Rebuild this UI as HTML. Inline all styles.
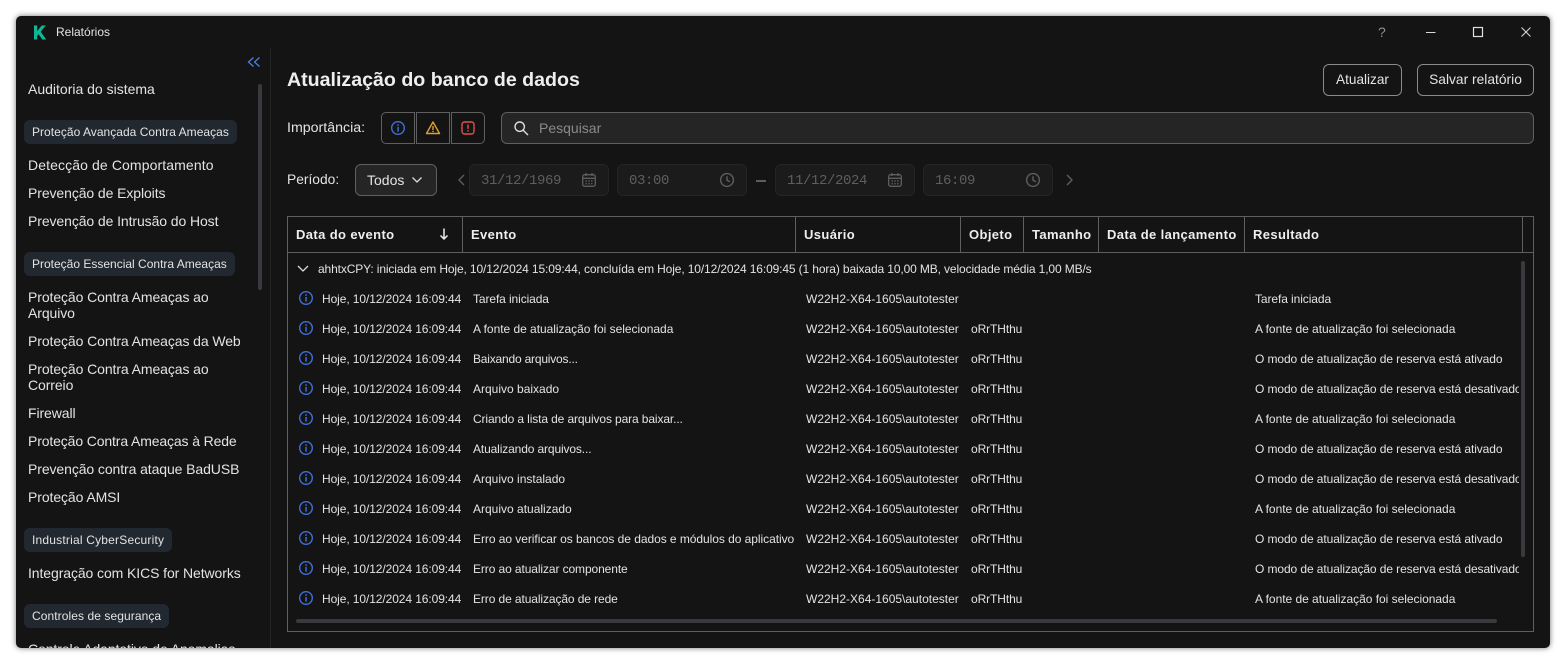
<!DOCTYPE html>
<html lang="pt"><head><meta charset="utf-8"><title>Relatórios</title>
<style>
*{box-sizing:border-box}
html,body{margin:0;padding:0;width:1566px;height:664px;overflow:hidden;background:#fff;font-family:"Liberation Sans",sans-serif}
#win{position:absolute;left:16px;top:16px;width:1534px;height:632px;background:#141414;border-radius:5px;box-shadow:0 0 6px rgba(0,0,0,.55);overflow:hidden}
#win>*{position:absolute}
.a{position:absolute;white-space:nowrap}
.n{left:12px;font-size:14px;line-height:16px;color:#e3e3e3;width:226px;white-space:normal;position:absolute;letter-spacing:-.09px}
.g{position:absolute;left:8px;height:24px;line-height:24px;background:#212830;border-radius:6px;color:#e3e3e3;font-size:12px;padding:0 8px;white-space:nowrap}
.btn{position:absolute;height:32px;border:1px solid #8a8a8a;border-radius:6px;color:#e3e3e3;font-size:13.6px;line-height:29px;text-align:center}
.sev{position:absolute;top:96px;width:34px;height:32px;border:1px solid #5f5f5f}
.sev svg{position:absolute;left:8px;top:7px}
.f{position:absolute;top:148px;height:32px;background:#1b1b1b;border:1px solid #242424;border-radius:6px;color:#5e5e5e;font:14px/32px "Liberation Mono",monospace;letter-spacing:-.4px;padding-left:11px}
.f svg{position:absolute;top:7px}
.hd{position:absolute;top:200px;height:37px;border-right:1px solid #5f5f5f;color:#eee;font-weight:bold;font-size:13px;line-height:37px;padding-left:8px;white-space:nowrap;letter-spacing:.38px}
.c{position:absolute;font-size:12px;line-height:16px;color:#e3e3e3;white-space:nowrap;overflow:hidden}
.d{left:306px;width:145px;letter-spacing:-.09px}.e{left:457px;width:322px;letter-spacing:-.1px}.u{left:790px;width:158px}.o{left:955px;width:56px;letter-spacing:-.1px}.r{left:1239px;width:264px;letter-spacing:-.09px}
.i{position:absolute;left:282px}
</style></head><body>
<svg width="0" height="0" style="position:absolute"><defs>
<symbol id="info" viewBox="0 0 16 16"><circle cx="8" cy="8" r="6.3" fill="none" stroke="#3f6fd8" stroke-width="1.4"/><rect x="7.3" y="7" width="1.5" height="4.6" fill="#3f6fd8"/><rect x="7.3" y="4.3" width="1.5" height="1.6" fill="#3f6fd8"/></symbol>
<symbol id="cal" viewBox="0 0 16 16"><g fill="none" stroke="#5e5e5e" stroke-width="1.3"><rect x="1.7" y="2.7" width="12.6" height="11.6" rx="2"/><path d="M2 6.3h12M5 1v3M11 1v3"/></g><path d="M4.5 8.3h1.4v1.4H4.500zM7.300 8.300h1.400v1.400H7.300zM10.100 8.300h1.400v1.400h-1.400zM4.500 11h1.400v1.400H4.500zM7.300 11h1.400v1.400H7.300zM10.100 11h1.400v1.400h-1.400z" fill="#5e5e5e"/></symbol>
<symbol id="clk" viewBox="0 0 16 16"><circle cx="8" cy="8" r="6.4" fill="none" stroke="#5e5e5e" stroke-width="1.4"/><path d="M8 4.300V8.300L11 9.800" fill="none" stroke="#5e5e5e" stroke-width="1.4"/></symbol>
</defs></svg>
<div id="win">
<!-- title bar -->
<svg style="left:17px;top:9px" width="14" height="15" viewBox="0 0 14 15"><path d="M1 .5h3.200v5.800L8.700 .5h4.100L7.700 6.800l5.600 7.700H9.300L5.600 9.200 4.200 10.900v3.600H1z" fill="#10b795"/></svg>
<div class="a" style="left:40px;top:9px;font-size:12px;line-height:15px;color:#e3e3e3">Relatórios</div>
<div class="a" style="left:1362px;top:8px;font-size:14px;line-height:16px;color:#8f8f8f">?</div>
<svg style="left:1410px;top:8px" width="120" height="16" viewBox="0 0 120 16"><path d="M-.5 8.500h10" stroke="#d8d8d8" stroke-width="1" fill="none"/><rect x="47.500" y="3.500" width="9" height="9" stroke="#e0e0e0" stroke-width="1.200" fill="none"/><path d="M95.500 3.500l9 9M104.500 3.500l-9 9" stroke="#d8d8d8" stroke-width="1" fill="none"/></svg>
<!-- sidebar -->
<div style="left:254px;top:32px;width:1px;height:600px;background:#262626"></div>
<svg style="left:231px;top:40px" width="14" height="12" viewBox="0 0 14 12"><path d="M6.500 1.500L1.500 6l5 4.500M12.500 1.500L7.500 6l5 4.500" fill="none" stroke="#4f7fe0" stroke-width="1.300"/></svg>
<div style="left:242px;top:68px;width:4px;height:206px;background:#3a3a3e;border-radius:2px"></div>
<div class="n" style="top:65px;letter-spacing:0">Auditoria do sistema</div>
<div class="g" style="top:104px;letter-spacing:.03px">Proteção Avançada Contra Ameaças</div>
<div class="n" style="top:141px;letter-spacing:.11px">Detecção de Comportamento</div>
<div class="n" style="top:169px">Prevenção de Exploits</div>
<div class="n" style="top:197px">Prevenção de Intrusão do Host</div>
<div class="g" style="top:236px">Proteção Essencial Contra Ameaças</div>
<div class="n" style="top:273px">Proteção Contra Ameaças ao Arquivo</div>
<div class="n" style="top:317px">Proteção Contra Ameaças da Web</div>
<div class="n" style="top:345px">Proteção Contra Ameaças ao Correio</div>
<div class="n" style="top:389px">Firewall</div>
<div class="n" style="top:417px;letter-spacing:-.13px">Proteção Contra Ameaças à Rede</div>
<div class="n" style="top:445px">Prevenção contra ataque BadUSB</div>
<div class="n" style="top:473px">Proteção AMSI</div>
<div class="g" style="top:512px;letter-spacing:.2px">Industrial CyberSecurity</div>
<div class="n" style="top:549px">Integração com KICS for Networks</div>
<div class="g" style="top:588px;letter-spacing:.08px">Controles de segurança</div>
<div class="n" style="top:625px">Controle Adaptativo de Anomalias</div>
<!-- heading -->
<div class="a" style="left:271px;top:52px;font-size:19.6px;line-height:24px;font-weight:bold;color:#eee">Atualização do banco de dados</div>
<div class="btn" style="left:1307px;top:48px;width:79px">Atualizar</div>
<div class="btn" style="left:1401px;top:48px;width:117px;font-size:13.8px">Salvar relatório</div>
<!-- importance -->
<div class="a" style="left:271px;top:104px;font-size:14.2px;line-height:16px;color:#e3e3e3">Importância:</div>
<div class="sev" style="left:365px;border-radius:5px 0 0 5px"><svg width="16" height="16"><use href="#info"/></svg></div>
<div class="sev" style="left:400px"><svg width="16" height="16" viewBox="0 0 16 16"><path d="M8 2L14.500 13.500H1.500z" fill="none" stroke="#e0a030" stroke-width="1.400" stroke-linejoin="round"/><path d="M7.300 6h1.400v4H7.300zM7.300 10.800h1.400v1.300H7.300z" fill="#e0a030"/></svg></div>
<div class="sev" style="left:435px;border-radius:0 5px 5px 0"><svg width="16" height="16" viewBox="0 0 16 16"><rect x="2" y="2" width="12" height="12" rx="2.500" fill="none" stroke="#e05050" stroke-width="1.400"/><path d="M7.300 4.500h1.400v4.400H7.300zM7.300 10h1.400v1.500H7.300z" fill="#e05050"/></svg></div>
<div style="left:485px;top:96px;width:1033px;height:32px;background:#252525;border:1px solid #5f5f5f;border-radius:6px"></div>
<svg style="left:497px;top:104px" width="16" height="16" viewBox="0 0 16 16"><circle cx="6.700" cy="6.700" r="4.700" fill="none" stroke="#ddd" stroke-width="1.400"/><path d="M10.200 10.200L15 15" stroke="#ddd" stroke-width="1.400"/></svg>
<div class="a" style="left:523px;top:104px;font-size:14px;line-height:16px;color:#8a8a8a">Pesquisar</div>
<!-- period -->
<div class="a" style="left:271px;top:156px;font-size:13.8px;line-height:16px;color:#e3e3e3">Período:</div>
<div style="left:339px;top:148px;width:82px;height:32px;background:#252525;border:1px solid #5f5f5f;border-radius:6px"></div>
<div class="a" style="left:351px;top:156px;font-size:14px;line-height:16px;color:#e3e3e3">Todos</div>
<svg style="left:395px;top:159px" width="12" height="10" viewBox="0 0 12 10"><path d="M1.500 2.500L6 7l4.500-4.500" fill="none" stroke="#ddd" stroke-width="1.300"/></svg>
<svg style="left:441px;top:158px" width="10" height="12" viewBox="0 0 10 12"><path d="M7 1L2 6l5 5" fill="none" stroke="#5e5e5e" stroke-width="1.400"/></svg>
<div class="f" style="left:453px;width:140px">31/12/1969<svg style="left:111px" width="16" height="16"><use href="#cal"/></svg></div>
<div class="f" style="left:601px;width:130px">03:00<svg style="left:101px" width="16" height="16"><use href="#clk"/></svg></div>
<div style="left:740px;top:164px;width:10px;height:1.500px;background:#5e5e5e"></div>
<div class="f" style="left:759px;width:140px">11/12/2024<svg style="left:111px" width="16" height="16"><use href="#cal"/></svg></div>
<div class="f" style="left:907px;width:130px">16:09<svg style="left:101px" width="16" height="16"><use href="#clk"/></svg></div>
<svg style="left:1048px;top:158px" width="10" height="12" viewBox="0 0 10 12"><path d="M3 1l5 5-5 5" fill="none" stroke="#5e5e5e" stroke-width="1.400"/></svg>
<!-- table -->
<div style="left:271px;top:200px;width:1247px;height:416px;border:1px solid #5f5f5f"></div>
<div style="left:271px;top:236px;width:1247px;height:1px;background:#5f5f5f"></div>
<div class="hd" style="left:272px;width:175px">Data do evento</div>
<svg style="left:421px;top:211px" width="14" height="14" viewBox="0 0 14 14"><path d="M7 1.500v10M3.500 8.500L7 12l3.500-3.500" fill="none" stroke="#eee" stroke-width="1.500"/></svg>
<div class="hd" style="left:447px;width:333px">Evento</div>
<div class="hd" style="left:780px;width:165px">Usuário</div>
<div class="hd" style="left:945px;width:63px">Objeto</div>
<div class="hd" style="left:1008px;width:75px">Tamanho</div>
<div class="hd" style="left:1083px;width:146px">Data de lançamento</div>
<div class="hd" style="left:1229px;width:278px">Resultado</div>
<svg style="left:281px;top:248px" width="12" height="10" viewBox="0 0 12 10"><path d="M1 2l5 5 5-5" fill="none" stroke="#ddd" stroke-width="1.300"/></svg>
<div class="c" style="left:302px;top:245px;width:1200px;letter-spacing:-.125px">ahhtxCPY: iniciada em Hoje, 10/12/2024 15:09:44, concluída em Hoje, 10/12/2024 16:09:45 (1 hora) baixada 10,00 MB, velocidade média 1,00 MB/s</div>

<svg class="i" style="top:274px" width="16" height="16"><use href="#info"/></svg><div class="c d" style="top:275px">Hoje, 10/12/2024 16:09:44</div><div class="c e" style="top:275px">Tarefa iniciada</div><div class="c u" style="top:275px">W22H2-X64-1605\autotester</div><div class="c r" style="top:275px">Tarefa iniciada</div>
<svg class="i" style="top:304px" width="16" height="16"><use href="#info"/></svg><div class="c d" style="top:305px">Hoje, 10/12/2024 16:09:44</div><div class="c e" style="top:305px;letter-spacing:-.03px">A fonte de atualização foi selecionada</div><div class="c u" style="top:305px">W22H2-X64-1605\autotester</div><div class="c o" style="top:305px">oRrTHthu</div><div class="c r" style="top:305px;letter-spacing:-.03px">A fonte de atualização foi selecionada</div>
<svg class="i" style="top:334px" width="16" height="16"><use href="#info"/></svg><div class="c d" style="top:335px">Hoje, 10/12/2024 16:09:44</div><div class="c e" style="top:335px;letter-spacing:-.2px">Baixando arquivos...</div><div class="c u" style="top:335px">W22H2-X64-1605\autotester</div><div class="c o" style="top:335px">oRrTHthu</div><div class="c r" style="top:335px">O modo de atualização de reserva está ativado</div>
<svg class="i" style="top:364px" width="16" height="16"><use href="#info"/></svg><div class="c d" style="top:365px">Hoje, 10/12/2024 16:09:44</div><div class="c e" style="top:365px;letter-spacing:0">Arquivo baixado</div><div class="c u" style="top:365px">W22H2-X64-1605\autotester</div><div class="c o" style="top:365px">oRrTHthu</div><div class="c r" style="top:365px">O modo de atualização de reserva está desativado</div>
<svg class="i" style="top:394px" width="16" height="16"><use href="#info"/></svg><div class="c d" style="top:395px">Hoje, 10/12/2024 16:09:44</div><div class="c e" style="top:395px;letter-spacing:-.12px">Criando a lista de arquivos para baixar...</div><div class="c u" style="top:395px">W22H2-X64-1605\autotester</div><div class="c o" style="top:395px">oRrTHthu</div><div class="c r" style="top:395px;letter-spacing:-.03px">A fonte de atualização foi selecionada</div>
<svg class="i" style="top:424px" width="16" height="16"><use href="#info"/></svg><div class="c d" style="top:425px">Hoje, 10/12/2024 16:09:44</div><div class="c e" style="top:425px;letter-spacing:-.13px">Atualizando arquivos...</div><div class="c u" style="top:425px">W22H2-X64-1605\autotester</div><div class="c o" style="top:425px">oRrTHthu</div><div class="c r" style="top:425px">O modo de atualização de reserva está ativado</div>
<svg class="i" style="top:454px" width="16" height="16"><use href="#info"/></svg><div class="c d" style="top:455px">Hoje, 10/12/2024 16:09:44</div><div class="c e" style="top:455px;letter-spacing:0">Arquivo instalado</div><div class="c u" style="top:455px">W22H2-X64-1605\autotester</div><div class="c o" style="top:455px">oRrTHthu</div><div class="c r" style="top:455px">O modo de atualização de reserva está desativado</div>
<svg class="i" style="top:484px" width="16" height="16"><use href="#info"/></svg><div class="c d" style="top:485px">Hoje, 10/12/2024 16:09:44</div><div class="c e" style="top:485px;letter-spacing:0">Arquivo atualizado</div><div class="c u" style="top:485px">W22H2-X64-1605\autotester</div><div class="c o" style="top:485px">oRrTHthu</div><div class="c r" style="top:485px;letter-spacing:-.03px">A fonte de atualização foi selecionada</div>
<svg class="i" style="top:514px" width="16" height="16"><use href="#info"/></svg><div class="c d" style="top:515px">Hoje, 10/12/2024 16:09:44</div><div class="c e" style="top:515px;letter-spacing:-.05px">Erro ao verificar os bancos de dados e módulos do aplicativo</div><div class="c u" style="top:515px">W22H2-X64-1605\autotester</div><div class="c o" style="top:515px">oRrTHthu</div><div class="c r" style="top:515px">O modo de atualização de reserva está ativado</div>
<svg class="i" style="top:544px" width="16" height="16"><use href="#info"/></svg><div class="c d" style="top:545px">Hoje, 10/12/2024 16:09:44</div><div class="c e" style="top:545px">Erro ao atualizar componente</div><div class="c u" style="top:545px">W22H2-X64-1605\autotester</div><div class="c o" style="top:545px">oRrTHthu</div><div class="c r" style="top:545px">O modo de atualização de reserva está desativado</div>
<svg class="i" style="top:574px" width="16" height="16"><use href="#info"/></svg><div class="c d" style="top:575px">Hoje, 10/12/2024 16:09:44</div><div class="c e" style="top:575px">Erro de atualização de rede</div><div class="c u" style="top:575px">W22H2-X64-1605\autotester</div><div class="c o" style="top:575px">oRrTHthu</div><div class="c r" style="top:575px;letter-spacing:-.03px">A fonte de atualização foi selecionada</div>
<div style="left:1505px;top:245px;width:4px;height:296px;background:#3a3a3e;border-radius:2px"></div>
<div style="left:280px;top:603px;width:1201px;height:4px;background:#3a3a3e;border-radius:2px"></div>
</div>
</body></html>
